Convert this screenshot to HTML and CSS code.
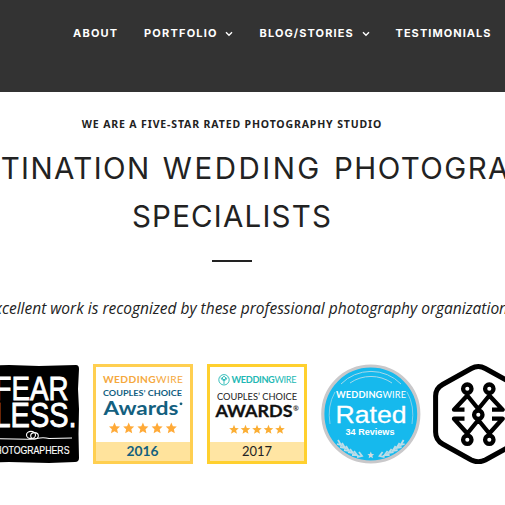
FILE: index.html
```html
<!DOCTYPE html>
<html lang="en">
<head>
<meta charset="utf-8">
<title>Wedding Photography</title>
<link rel="stylesheet" href="styles.css">
</head>
<body>
<header class="site-header">
  <nav class="nav">
    <a class="nav-about">ABOUT</a>
    <a class="nav-portfolio">PORTFOLIO</a>
    <svg class="chev" viewBox="0 0 8 6"><path d="M1 1.2 4 4.2 7 1.2"/></svg>
    <a class="nav-blog">BLOG/STORIES</a>
    <svg class="chev" viewBox="0 0 8 6"><path d="M1 1.2 4 4.2 7 1.2"/></svg>
    <a class="nav-test">TESTIMONIALS</a>
  </nav>
</header>
<main>
  <p class="eyebrow">WE ARE A FIVE-STAR RATED PHOTOGRAPHY STUDIO</p>
  <h1 class="title"><span class="line wide">DESTINATION <span class="wed">WEDDING</span> PHOTOGRAPHY</span><span class="line">SPECIALISTS</span></h1>
  <div class="rule"></div>
  <p class="lead">Our excellent work is recognized by these professional photography organizations</p>
  <div class="badges">
    <svg class="badge" viewBox="0 0 100 100">
      <path d="M0 2 30 1 60 2 97 1Q100 1 100 5L99 25 100 45 99.500 70 100 94Q100 98 96 98L70 99 30 98 0 99Z" fill="#000"/>
      <g class="franklin" fill="#fff" stroke="#fff" stroke-width=".9">
        <text x="15.5" y="36" font-size="34" textLength="74" lengthAdjust="spacingAndGlyphs">FEAR</text>
        <text x="15.5" y="63" font-size="35" textLength="82" lengthAdjust="spacingAndGlyphs">LESS.</text>
        <text x="10.5" y="90.3" font-size="10.5" stroke-width=".15" textLength="80" lengthAdjust="spacingAndGlyphs">PHOTOGRAPHERS</text>
      </g>
      <g fill="none" stroke="#fff" stroke-width="1.1"><path d="M0 74.500 48 75.200Q55 75.500 58 74.500 64 73 70 74.500L93 74"/><ellipse cx="52" cy="71" rx="4.500" ry="3.600"/><ellipse cx="55.500" cy="71.800" rx="3.800" ry="3.200"/></g>
    </svg>
    <svg class="badge" viewBox="0 0 100 100">
      <path d="M0 0H100V100H0Z" fill="#ffcf50"/><path d="M3 3H97V78H3Z" fill="#fff"/><path d="M3 78H97V97H3Z" fill="#ffe39c"/>
      <text x="10" y="19" class="geo" font-size="10.2" fill="#f5a83c" textLength="80"><tspan font-weight="700">WEDDING</tspan>WIRE</text>
      <text x="10" y="32.3" class="geo" font-size="8.4" font-weight="700" fill="#13607f" textLength="79" lengthAdjust="spacingAndGlyphs">COUPLES’ CHOICE</text>
      <text x="10.5" y="51.400" class="geo" font-size="19" font-weight="700" fill="#13607f" textLength="75" lengthAdjust="spacingAndGlyphs">Awards</text>
      <circle cx="88" cy="39.8" r="1.4" fill="#13607f"/>
      <g fill="#ffaa38"><path id="star" d="M21.5 58.5 23.1 62.3 27 62.6 24.1 65.3 25 69.2 21.5 67.2 18 69.2 18.9 65.3 16 62.6 19.9 62.3Z"/><use href="#star" x="14.2"/><use href="#star" x="28.4"/><use href="#star" x="42.6"/><use href="#star" x="56.8"/></g>
      <text x="33.5" y="92" class="geo" font-size="13" font-weight="700" fill="#13607f" textLength="32" lengthAdjust="spacingAndGlyphs">2016</text>
    </svg>
    <svg class="badge" viewBox="0 0 100 100">
      <path d="M0 0H100V100H0Z" fill="#ffd02e"/><path d="M3 3H97V78H3Z" fill="#fff"/><path d="M3 78H97V97H3Z" fill="#ffe5a3"/>
      <g fill="none" stroke="#22b8b4" stroke-width=".9"><circle cx="17" cy="15.8" r="5.2"/><path d="M17 20V15.5M17 12.2 15 14 17 16 19 14ZM14 13.5Q14 16 17 16.5 20 16 20 13.5"/></g>
      <text x="24.5" y="19.3" class="geo" font-size="9.200" fill="#22b8b4" textLength="65"><tspan font-weight="700">WEDDING</tspan>WIRE</text>
      <text x="10" y="35.5" class="geo" font-size="8.7" fill="#222" textLength="80" lengthAdjust="spacingAndGlyphs">COUPLES’ CHOICE</text>
      <text x="8.5" y="53.2" class="geo" font-size="16.8" font-weight="700" fill="#111" stroke="#111" stroke-width=".3" textLength="77" lengthAdjust="spacingAndGlyphs">AWARDS</text>
      <text x="86" y="46.5" class="geo" font-size="7" font-weight="700" fill="#333">®</text>
      <g fill="#fbae34"><path id="star2" d="M27 60.8 28.3 64 31.8 64.2 29.1 66.4 30 69.8 27 67.9 24 69.8 24.9 66.4 22.2 64.2 25.7 64Z"/><use href="#star2" x="11.5"/><use href="#star2" x="23"/><use href="#star2" x="34.5"/><use href="#star2" x="46"/></g>
      <text x="35" y="92.3" class="geo" font-size="13.5" font-weight="400" fill="#222" textLength="30" lengthAdjust="spacingAndGlyphs">2017</text>
    </svg>
    <svg class="badge" viewBox="0 0 100 100">
      <circle cx="49.8" cy="50" r="48" fill="#16b9ed" stroke="#c9c8ca" stroke-width="3.2"/>
      <path d="M20 20A42 42 0 0 1 80 20M29 19A37 37 0 0 1 71 19" fill="none" stroke="#a8d9ea" stroke-width="1"/>
      <path d="M14 28Q6 42 9 60M86 28Q94 42 91 60" fill="none" stroke="#85d0ea" stroke-width="1"/>
      <text x="15" y="34.300" class="geo" font-size="9.2" fill="#fff" textLength="70"><tspan font-weight="700">WEDDING</tspan>WIRE</text>
      <text x="14.5" y="58.6" class="arial" font-size="24.5" fill="#fff" stroke="#fff" stroke-width=".3" textLength="71" lengthAdjust="spacingAndGlyphs">Rated</text>
      <text x="24.5" y="71" class="arial" font-size="9.4" font-weight="700" fill="#fff" textLength="49" lengthAdjust="spacingAndGlyphs">34 Reviews</text>
      <g id="laurel" fill="none" stroke="#bddce7" stroke-width="1.8"><path d="M17 76l3 5-4-1M21 79l3 5-5-1M25 82l3 5-5-1M29 85l3 4-5-1M33 87l3 4-5 0M38 88l3 4-5 1"/></g>
      <use href="#laurel" transform="translate(99.6 0) scale(-1 1)"/>
      <path d="M49.8 87.5 50.8 90 53.2 90.2 51.3 91.8 52 94.3 49.8 92.9 47.6 94.3 48.3 91.8 46.4 90.2 48.8 90Z" fill="#d6dde0"/>
    </svg>
    <svg class="badge" viewBox="0 0 100 100" fill="none" stroke="#000" stroke-width="4.300">
      <path d="M36.300 4.500Q43.300 .5 50.300 4.500L79 20.500Q86 24.500 86 32V68Q86 76 79 80L50.300 96Q43.300 99.500 36.300 96L7.600 80Q.6 76 .6 68V32Q.6 24.500 7.600 20.500Z" stroke-width="5"/>
      <g stroke-linejoin="round"><path d="M29.500 45.700H19L32.300 31.500 43.300 45 54.300 31.500 67.600 45.700H57"/><path d="M29.500 54.700H19L32.300 69.500 43.300 56 54.300 69.500 67.600 54.700H57"/></g>
      <g fill="#fff"><circle cx="32.300" cy="24.700" r="4.200"/><circle cx="54.300" cy="24.700" r="4.200"/><circle cx="43.300" cy="50.700" r="4.200"/><circle cx="32.300" cy="75.700" r="4.200"/><circle cx="54.300" cy="75.700" r="4.200"/></g>
    </svg>
  </div>
</main>
</body>
</html>
```
FILE: styles.css
```css
* { box-sizing: border-box; }
body { margin: 0; width: 505px; height: 505px; overflow: hidden; background: #fff; color: #222; font-family: "Open Sans", "Noto Sans", sans-serif; }
.site-header { height: 92px; background: #333; padding: 25px 0 0 73px; }
.nav { display: flex; align-items: center; height: 17px; color: #fff; font: 700 11px/17px Inter, sans-serif; letter-spacing: 1.1px; white-space: nowrap; }
.nav-about { width: 71px; letter-spacing: 1.2px; }
.nav-portfolio { width: 81px; letter-spacing: 1.2px; }
.nav-blog { width: 102px; margin-left: 26.5px; }
.nav-test { margin-left: 26px; letter-spacing: 1.05px; }
.chev { width: 8px; height: 6px; fill: none; stroke: #fff; stroke-width: 1.4; }
main { padding-top: 24px; overflow: hidden; }
.eyebrow { width: 464px; margin: 0; text-align: center; font: 700 10.5px/17px "Noto Sans", sans-serif; letter-spacing: .86px; white-space: nowrap; }
.title { margin: 11px 0 0; width: 464px; font: 400 29.5px/48px Inter, sans-serif; letter-spacing: 1.2px; text-align: center; white-space: nowrap; }
.line { display: block; }
.wide { text-align: left; margin-left: -61.5px; letter-spacing: 1.4px; word-spacing: 2.5px; }
.wed { letter-spacing: 2.5px; }
.rule { width: 40px; height: 2px; background: #222; margin: 20px 0 0 212px; }
.lead { margin: 33px 0 0 -43.5px; font: italic 400 15.5px/26px "Open Sans", sans-serif; white-space: nowrap; }
.badges { display: flex; gap: 14px; margin: 43px 0 0 -21px; }
.badge { flex: none; width: 100px; height: 100px; overflow: visible; }
.geo { font-family: Lato, sans-serif; }
.arial { font-family: "Liberation Sans", sans-serif; }
.franklin { font-family: "Liberation Sans", sans-serif; }
```
